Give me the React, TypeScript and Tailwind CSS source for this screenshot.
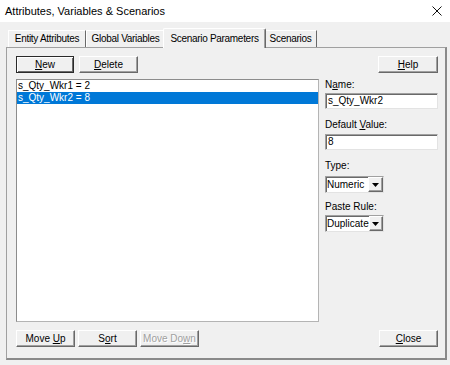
import React from 'react';

const raised =
  'border border-t-white border-l-white border-r-[#696969] border-b-[#696969] shadow-[inset_-1px_-1px_0_#a0a0a0]';
const sunken =
  'border border-t-[#a0a0a0] border-l-[#a0a0a0] border-r-[#e3e3e3] border-b-[#e3e3e3] shadow-[inset_1px_1px_0_#696969]';

function U({ children }: { children: React.ReactNode }) {
  return <span className="underline underline-offset-[1px]">{children}</span>;
}

function Button({
  children,
  className = '',
  isDefault = false,
  disabled = false,
}: {
  children: React.ReactNode;
  className?: string;
  isDefault?: boolean;
  disabled?: boolean;
}) {
  const frame = isDefault
    ? 'border border-[#2a2a2a] shadow-[inset_1px_1px_0_#fff,inset_-1px_-1px_0_#696969]'
    : raised;
  const text = disabled ? 'text-[#a0a0a0] [text-shadow:1px_1px_0_#fff]' : 'text-black';
  return (
    <div
      className={`h-[17px] flex items-center justify-center text-[10px] leading-[12px] bg-[#f0f0f0] ${frame} ${text} ${className}`}
    >
      <span>{children}</span>
    </div>
  );
}

function Select({ value }: { value: string }) {
  return (
    <div className={`w-[59px] h-[17px] bg-white flex ${sunken}`}>
      <div className="flex-1 pl-[1px] pt-[2px] text-[10px] leading-[12px] text-black">{value}</div>
      <div className={`w-[15px] h-full bg-[#f0f0f0] flex items-center justify-center ${raised}`}>
        <svg width="7" height="4" viewBox="0 0 7 4">
          <polygon points="0,0 7,0 3.5,4" fill="#000" />
        </svg>
      </div>
    </div>
  );
}

function Label({ children, className = '' }: { children: React.ReactNode; className?: string }) {
  return <div className={`h-[12px] text-[10px] leading-[12px] text-black ${className}`}>{children}</div>;
}

const tabs = [
  { label: 'Entity Attributes', w: 'w-[78px]' },
  { label: 'Global Variables', w: 'w-[79px]' },
  { label: 'Scenario Parameters', w: 'w-[103px]', active: true },
  { label: 'Scenarios', w: 'w-[53px]' },
];

export default function App() {
  return (
    <div className="w-[450px] h-[365px] bg-[#f0f0f0] flex flex-col overflow-hidden font-['Liberation_Sans',Arial,sans-serif]">
      {/* Title bar */}
      <div className="h-[22px] bg-white flex items-center justify-between pl-[5px] pr-[8px]">
        <span className="text-[11px] leading-[13px] text-black">Attributes, Variables &amp; Scenarios</span>
        <svg width="10" height="10" viewBox="0 0 10 10">
          <path d="M0.5 0.5 L9.5 9.5 M9.5 0.5 L0.5 9.5" stroke="#111" strokeWidth="1" />
        </svg>
      </div>

      <div className="pl-[6px] pr-[3px]">
        {/* Tabs */}
        <div className="mt-[6px] h-[19px] pl-[2px] flex items-end">
          {tabs.map((t) =>
            t.active ? (
              <div
                key={t.label}
                className={`${t.w} h-[20px] -mb-px -mx-[2px] relative z-10 bg-[#f0f0f0] rounded-t-[2px] border-t border-l border-r border-t-white border-l-white border-r-[#696969] shadow-[inset_-1px_0_0_#a0a0a0] flex justify-center pt-[4px] text-[10px] leading-[12px] tracking-[-0.3px] text-black`}
              >
                {t.label}
              </div>
            ) : (
              <div
                key={t.label}
                className={`${t.w} h-[17px] border-t border-l border-r border-t-white border-l-white border-r-[#696969] flex justify-center pt-[2px] text-[10px] leading-[12px] tracking-[-0.3px] text-black`}
              >
                {t.label}
              </div>
            )
          )}
        </div>

        {/* Tab panel */}
        <div className="h-[313px] border-t border-l border-r-2 border-b-2 border-t-[#a0a0a0] border-l-[#a0a0a0] border-r-[#8a8a8a] border-b-[#8a8a8a] pl-[9px] pt-[8px] flex gap-[6px]">
          {/* Left column */}
          <div className="w-[303px] flex flex-col">
            <div className="flex gap-[5px]">
              <Button isDefault className="w-[58px]">
                <U>N</U>ew
              </Button>
              <Button className="w-[59px]">
                <U>D</U>elete
              </Button>
            </div>

            <div className="mt-[6px] h-[243px] bg-white border border-[#8c8c8c] border-r-[#b4b4b4] border-b-[#b4b4b4]">
              <div className="h-[12px] pl-[1px] text-[10px] leading-[12px] text-black">s_Qty_Wkr1 = 2</div>
              <div className="h-[12px] pl-[1px] text-[10px] leading-[12px] text-white bg-[#0078d7]">s_Qty_Wkr2 = 8</div>
            </div>

            <div className="mt-[8px] flex gap-[3px]">
              <Button className="w-[59px]">
                Move <U>U</U>p
              </Button>
              <Button className="w-[59px]">
                S<U>o</U>rt
              </Button>
              <Button disabled className="w-[59px]">
                Move Do<U>w</U>n
              </Button>
            </div>
          </div>

          {/* Right column */}
          <div className="w-[113px] flex flex-col">
            <Button className="w-[60px] self-end">
              <U>H</U>elp
            </Button>

            <Label className="mt-[6px]">
              N<U>a</U>me:
            </Label>
            <div className={`mt-[2px] h-[16px] bg-white pl-[2px] pt-[1px] text-[10px] leading-[12px] text-black ${sunken}`}>
              s_Qty_Wkr2
            </div>

            <Label className="mt-[10px]">
              Default <U>V</U>alue:
            </Label>
            <div className={`mt-[3px] h-[16px] bg-white pl-[2px] pt-[1px] text-[10px] leading-[12px] text-black ${sunken}`}>
              8
            </div>

            <Label className="mt-[10px]">Type:</Label>
            <div className="mt-[4px]">
              <Select value="Numeric" />
            </div>

            <Label className="mt-[8px]">Paste Rule:</Label>
            <div className="mt-[2px]">
              <Select value="Duplicate" />
            </div>

            <div className="flex-1" />
            <Button className="w-[59px] self-end mb-[11px]">
              <U>C</U>lose
            </Button>
          </div>
        </div>
      </div>
    </div>
  );
}
